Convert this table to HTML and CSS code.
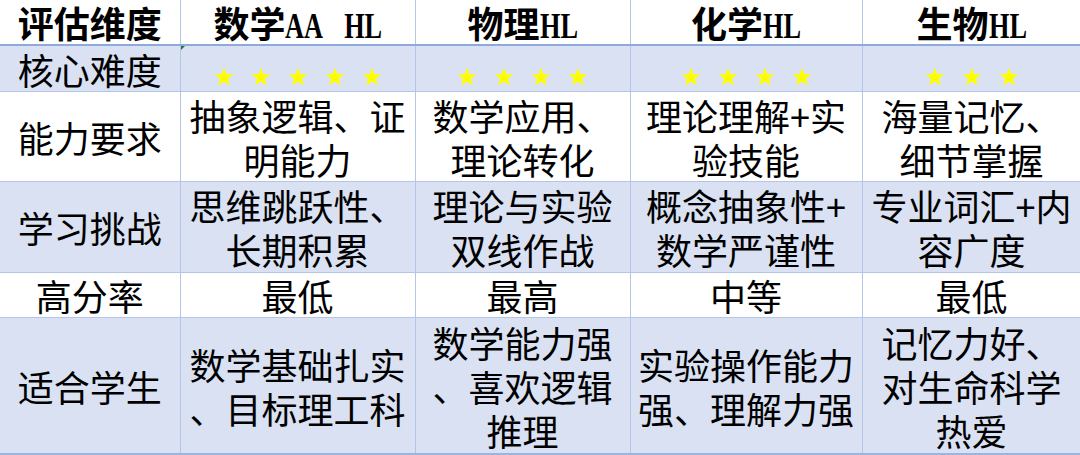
FILE: index.html
```html
<!DOCTYPE html>
<html lang="zh-CN">
<head>
<meta charset="utf-8">
<title>IB HL 科目对比</title>
<link rel="stylesheet" href="styles.css">
</head>
<body>
<svg class="defs" width="0" height="0" aria-hidden="true">
  <defs>
    <g id="star">
      <polygon points="10,0.5 12.35,7.26 19.51,7.41 13.8,11.74 15.88,18.59 10,14.5 4.12,18.59 6.2,11.74 0.49,7.41 7.65,7.26" fill="#FFFF00"/>
      <polygon points="10,8 12.3,9.7 11.4,12.4 8.6,12.4 7.7,9.7" fill="none" stroke="#F2F200" stroke-width="0.8"/>
    </g>
  </defs>
</svg>
<table class="grid">
  <colgroup>
    <col class="c1"><col class="c2"><col class="c3"><col class="c4"><col class="c5">
  </colgroup>
  <thead>
    <tr class="head">
      <th>评估维度</th>
      <th>数学<span class="lat wide">AA HL</span></th>
      <th>物理<span class="lat">HL</span></th>
      <th>化学<span class="lat">HL</span></th>
      <th>生物<span class="lat">HL</span></th>
    </tr>
  </thead>
  <tbody>
    <tr class="r1 shade">
      <td>核心难度</td>
      <td class="mark"><span class="stars"><svg viewBox="0 0 20 20"><use href="#star"/></svg><svg viewBox="0 0 20 20"><use href="#star"/></svg><svg viewBox="0 0 20 20"><use href="#star"/></svg><svg viewBox="0 0 20 20"><use href="#star"/></svg><svg viewBox="0 0 20 20"><use href="#star"/></svg></span></td>
      <td><span class="stars"><svg viewBox="0 0 20 20"><use href="#star"/></svg><svg viewBox="0 0 20 20"><use href="#star"/></svg><svg viewBox="0 0 20 20"><use href="#star"/></svg><svg viewBox="0 0 20 20"><use href="#star"/></svg></span></td>
      <td><span class="stars"><svg viewBox="0 0 20 20"><use href="#star"/></svg><svg viewBox="0 0 20 20"><use href="#star"/></svg><svg viewBox="0 0 20 20"><use href="#star"/></svg><svg viewBox="0 0 20 20"><use href="#star"/></svg></span></td>
      <td><span class="stars"><svg viewBox="0 0 20 20"><use href="#star"/></svg><svg viewBox="0 0 20 20"><use href="#star"/></svg><svg viewBox="0 0 20 20"><use href="#star"/></svg></span></td>
    </tr>
    <tr class="r2">
      <td>能力要求</td>
      <td>抽象逻辑、证<br>明能力</td>
      <td>数学应用、<br>理论转化</td>
      <td>理论理解+实<br>验技能</td>
      <td>海量记忆、<br>细节掌握</td>
    </tr>
    <tr class="r3 shade">
      <td>学习挑战</td>
      <td>思维跳跃性、<br>长期积累</td>
      <td>理论与实验<br>双线作战</td>
      <td>概念抽象性+<br>数学严谨性</td>
      <td>专业词汇+内<br>容广度</td>
    </tr>
    <tr class="r4">
      <td>高分率</td>
      <td>最低</td>
      <td>最高</td>
      <td>中等</td>
      <td>最低</td>
    </tr>
    <tr class="r5 shade">
      <td>适合学生</td>
      <td>数学基础扎实<br>、目标理工科</td>
      <td>数学能力强<br>、喜欢逻辑<br>推理</td>
      <td>实验操作能力<br>强、理解力强</td>
      <td>记忆力好、<br>对生命科学<br>热爱</td>
    </tr>
  </tbody>
</table>
</body>
</html>
```
FILE: styles.css
```css
html, body {
  margin: 0;
  padding: 0;
  background: #ffffff;
}

.defs {
  position: absolute;
  width: 0;
  height: 0;
  overflow: hidden;
}

.grid {
  border-collapse: collapse;
  table-layout: fixed;
  width: 1081px;
  font-family: "Noto Sans CJK SC", "Noto Sans", sans-serif;
  font-size: 36px;
  color: #000000;
}

.c1 { width: 180px; }
.c2 { width: 235px; }
.c3 { width: 215px; }
.c4 { width: 232px; }
.c5 { width: 219px; }

.grid th,
.grid td {
  padding: 0;
  text-align: center;
  vertical-align: middle;
  line-height: 44px;
  white-space: nowrap;
  border: 1px solid #B4C6E7;
}

.grid th {
  border-top: none;
}

.grid tr > :first-child {
  border-left: none;
}

.head th {
  height: 44px;
  line-height: 44px;
  font-weight: 700;
  border-bottom: 2px solid #8EA9DB;
}

.lat {
  display: inline-block;
  font-family: "Liberation Serif", serif;
  font-size: 36px;
  font-weight: 700;
  line-height: 0;
  white-space: pre;
  transform: scaleX(0.73);
  transform-origin: left center;
  margin-right: -14px;
}

.lat.wide {
  word-spacing: 22px;
  margin-right: -37px;
}

.shade td {
  background: #D9E1F2;
}

.r1 td { height: 45px; }
.r2 td { height: 89px; }
.r3 td { height: 90px; }
.r4 td { height: 44px; }
.r5 td {
  height: 135px;
  border-bottom: 2px solid #9BB4E0;
}

.stars {
  display: inline-flex;
  gap: 17px;
  align-items: center;
  vertical-align: middle;
  position: relative;
  top: 2px;
}

.stars svg {
  width: 20px;
  height: 20px;
  display: block;
}

.mark {
  position: relative;
}

.mark::before {
  content: "";
  position: absolute;
  left: 0;
  top: 0;
  border-top: 4px solid #1E7B34;
  border-right: 4px solid transparent;
}
```
